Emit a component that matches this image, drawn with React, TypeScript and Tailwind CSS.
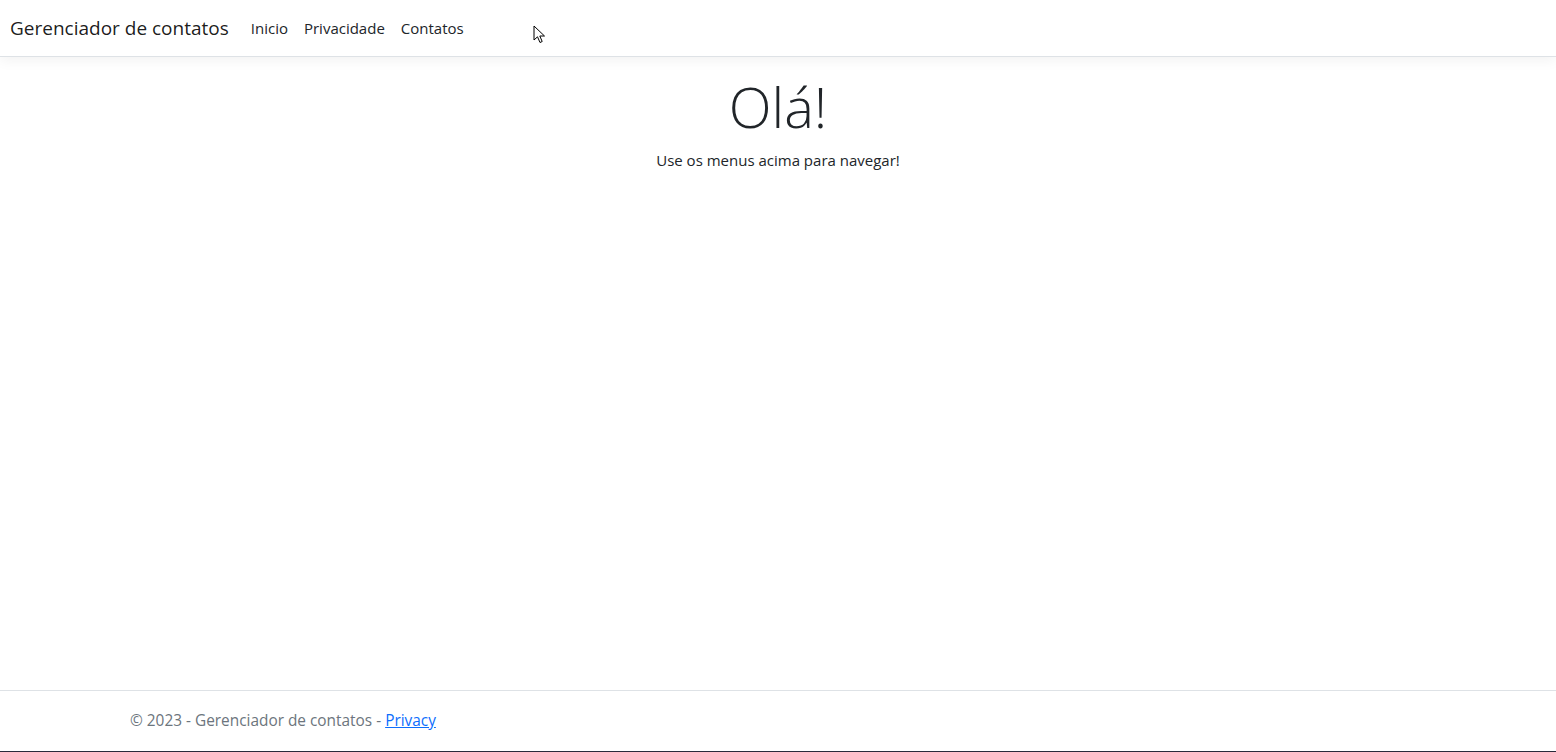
import { useState } from 'react';

const NAV = ['Inicio', 'Privacidade', 'Contatos'];

function Cursor() {
  return (
    <svg
      className="pointer-events-none absolute left-[533px] top-[25px]"
      width="13"
      height="20"
      viewBox="0 0 13 20"
    >
      <path
        d="M1 1 L1 15 L4.5 11.8 L7 17.5 L9.2 16.5 L6.8 11 L11.5 11 Z"
        fill="#ffffff"
        stroke="#000000"
        strokeWidth="1"
        strokeLinejoin="miter"
      />
    </svg>
  );
}

export default function App() {
  const [active, setActive] = useState('Inicio');

  return (
    <div className="relative flex min-h-screen flex-col bg-white font-['Open_Sans','Noto_Sans',sans-serif] text-[#212529]">
      {/* Header */}
      <header className="mb-4 border-b border-[#dee2e6] shadow-[0_4px_12px_rgba(0,0,0,0.05)]">
        <nav className="flex h-[56px] items-center px-[10px]">
          <a href="#" className="mr-[14px] text-[19px] leading-[30px] text-black/90">
            Gerenciador de contatos
          </a>
          <ul className="flex items-center">
            {NAV.map((label) => (
              <li key={label}>
                <button
                  onClick={() => setActive(label)}
                  className={`px-2 text-[15px] leading-6 ${active === label ? 'text-[#212529]' : 'text-[#212529]'}`}
                >
                  {label}
                </button>
              </li>
            ))}
          </ul>
        </nav>
      </header>

      {/* Main */}
      <main className="flex-1 pb-4 text-center">
        <h1 className="mb-2 text-[56px] font-light leading-[1.2]">Olá!</h1>
        <p className="text-[15px] leading-6">Use os menus acima para navegar!</p>
      </main>

      {/* Footer */}
      <footer className="h-[61px] border-t border-[#dee2e6] text-[15.4px] leading-[60px] text-[#6c757d]">
        <div className="mx-auto max-w-[1320px] px-3">
          © 2023 - Gerenciador de contatos -{' '}
          <a href="#" className="text-[#0d6efd] underline">
            Privacy
          </a>
        </div>
      </footer>
      <div className="h-px bg-[#2a2a3a]" />

      <Cursor />
    </div>
  );
}
